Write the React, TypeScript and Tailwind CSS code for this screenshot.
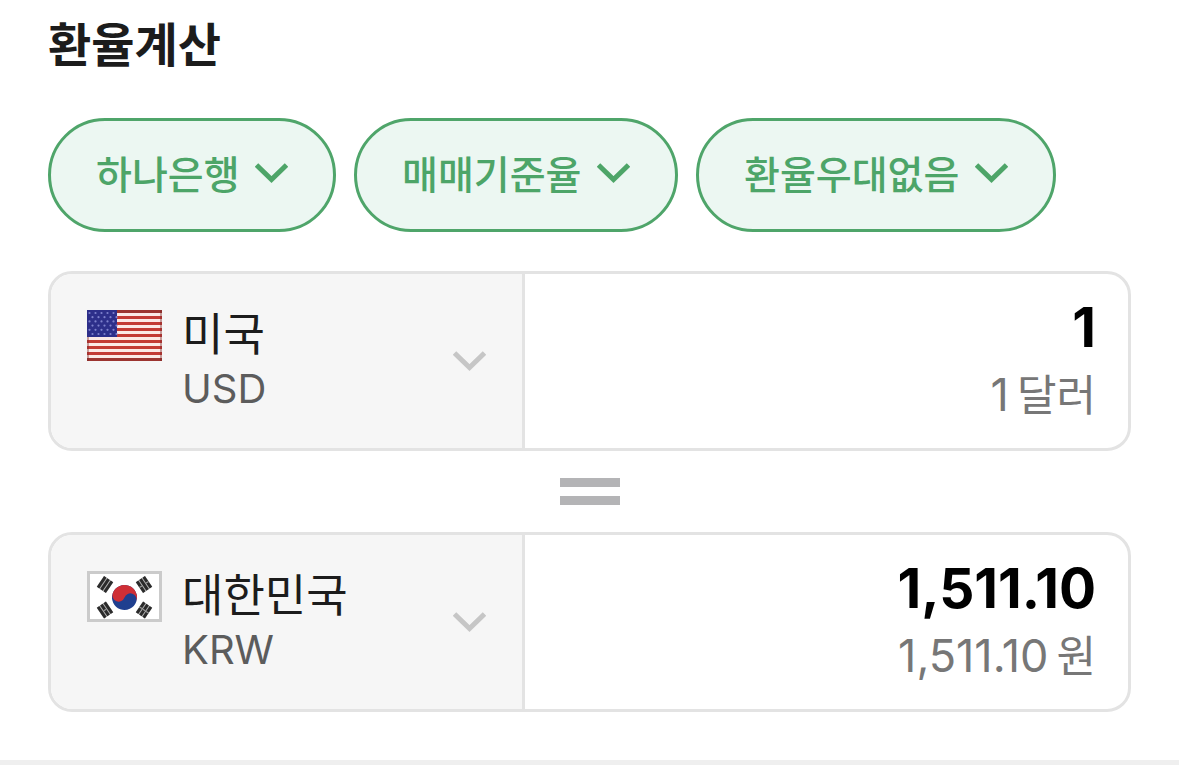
import React, { useState } from "react";

interface Currency {
  code: string;
  name: string;
  unit: string;
  flag: React.ReactNode;
}

const STAR_ROWS = [0, 1, 2, 3, 4, 5];
const STAR_COLS = [0, 1, 2, 3, 4];

function UsFlag() {
  return (
    <svg viewBox="0 0 75 51" className="h-[51px] w-[75px] shrink-0" aria-hidden="true">
      <rect width="75" height="51" fill="#fbe9e6" />
      {[0, 6, 12, 18, 24, 30, 36, 42, 48].map((y) => (
        <rect key={y} y={y} width="75" height="3" fill="#c33a34" />
      ))}
      <path d="M0 0h75v3H0zM0 48h75v3H0z" fill="#9c3430" />
      <path d="M0 27h2v24H0zM73 0h2v51h-2z" fill="#7a2a2a" opacity="0.4" />
      <rect width="30" height="27" fill="#2d2f8a" />
      {STAR_ROWS.map((row) =>
        STAR_COLS.map((col) => (
          <circle
            key={`${row}-${col}`}
            cx={2.5 + col * 6 + (row % 2 ? 3 : 0)}
            cy={3 + row * 4.2}
            r="1.1"
            fill="#7d80cc"
          />
        ))
      )}
    </svg>
  );
}

interface TrigramProps {
  x: number;
  y: number;
  angle: number;
  broken: number[];
}

function Trigram({ x, y, angle, broken }: TrigramProps) {
  return (
    <g transform={`translate(${x} ${y}) rotate(${angle})`}>
      <rect x="-6.5" y="-5.5" width="13" height="11" fill="#b5b5b5" />
      {[-4, 0, 4].map((dy, i) => (
        <g key={dy}>
          <rect x="-6.5" y={dy - 1.5} width="13" height="3" fill="#2b2b2b" />
          {broken.includes(i) && <rect x="-0.6" y={dy - 1.5} width="1.2" height="3" fill="#999" />}
        </g>
      ))}
    </g>
  );
}

function KrFlag() {
  return (
    <svg viewBox="0 0 75 51" className="h-[51px] w-[75px] shrink-0" aria-hidden="true">
      <rect x="1.5" y="1.5" width="72" height="48" fill="#fff" stroke="#cbcbcb" strokeWidth="3" />
      <g transform="rotate(20 37.5 26.5)">
        <circle cx="37.5" cy="26.5" r="12.5" fill="#1f3f8f" />
        <path
          d="M25 26.5a12.5 12.5 0 0 1 25 0a6.25 6.25 0 0 0-12.5 0a6.25 6.25 0 0 1-12.5 0z"
          fill="#cf2f36"
        />
      </g>
      <Trigram x={18} y={13.5} angle={-56} broken={[]} />
      <Trigram x={57} y={13.5} angle={56} broken={[0, 2]} />
      <Trigram x={18} y={39} angle={56} broken={[1]} />
      <Trigram x={57} y={39} angle={-56} broken={[0, 1, 2]} />
    </svg>
  );
}

function Chevron({ className }: { className: string }) {
  return (
    <svg
      viewBox="0 0 33 20"
      className={`pointer-events-none h-5 w-[33px] shrink-0 ${className}`}
      fill="none"
      stroke="currentColor"
      strokeWidth="5"
      aria-hidden="true"
    >
      <path d="M1.5 2 16.5 16.5 31.5 2" />
    </svg>
  );
}

const filters = [
  { id: "bank", label: "은행", value: "하나은행" },
  { id: "rate", label: "환율 종류", value: "매매기준율" },
  { id: "discount", label: "환율우대", value: "환율우대없음" },
];

const usd: Currency = { code: "USD", name: "미국", unit: "달러", flag: <UsFlag /> };
const krw: Currency = { code: "KRW", name: "대한민국", unit: "원", flag: <KrFlag /> };

function FilterSelect({ id, label, value }: { id: string; label: string; value: string }) {
  return (
    <div className="grid items-center">
      <select
        id={id}
        aria-label={label}
        defaultValue={value}
        className="col-start-1 row-start-1 h-[114px] appearance-none rounded-full border-3 border-[#4fa56a] bg-[#ecf7f2] pr-[93px] pl-[45px] text-[39px] font-medium text-[#4da568]"
      >
        <option>{value}</option>
      </select>
      <Chevron className="col-start-1 row-start-1 mr-12 mb-1 justify-self-end text-[#4da568]" />
    </div>
  );
}

interface CurrencyRowProps {
  currency: Currency;
  amount: string;
  onChange: (value: string) => void;
}

function CurrencyRow({ currency, amount, onChange }: CurrencyRowProps) {
  return (
    <div className="flex h-[180px] overflow-hidden rounded-3xl border-3 border-[#e3e3e3] bg-white">
      <div className="flex w-[44%] items-center border-r-3 border-[#e3e3e3] bg-[#f6f6f6] px-9">
        <div className="flex min-w-0 flex-1 items-start gap-5">
          <div className="pt-[3px]">{currency.flag}</div>
          <div className="min-w-0 flex-1">
            <select
              id={`country-${currency.code}`}
              aria-label="국가"
              defaultValue={currency.name}
              className="block h-14 w-full appearance-none bg-transparent text-[45px] leading-14 text-[#1c1c1c]"
            >
              <option>{currency.name}</option>
            </select>
            <label htmlFor={`country-${currency.code}`} className="block text-[40px] leading-[52px] text-[#5c5c5c]">
              {currency.code}
            </label>
          </div>
        </div>
        <Chevron className="text-[#c6c6c6]" />
      </div>
      <div className="flex min-w-0 flex-1 flex-col justify-center pr-8 pl-9">
        <input
          type="text"
          inputMode="decimal"
          aria-label={`${currency.name} ${currency.code}`}
          value={amount}
          onChange={(e) => onChange(e.target.value)}
          className="h-[68px] w-full bg-transparent text-right text-[55px] font-bold text-black outline-none"
        />
        <p className="flex items-baseline justify-end gap-2 text-[#777]">
          <span className="text-[45px] leading-[68px]">{amount}</span>
          <span className="text-[43px] leading-[68px]">{currency.unit}</span>
        </p>
      </div>
    </div>
  );
}

export default function App() {
  const [from, setFrom] = useState("1");
  const [to, setTo] = useState("1,511.10");

  return (
    <main className="bg-white font-[Inter,'Noto_Sans_CJK_KR',sans-serif]">
      <section className="px-12 pt-3 pb-12">
        <h1 className="text-[47px] leading-[66px] font-bold text-[#1c1c1c]">환율계산</h1>
        <div className="mt-10 flex gap-[18px]">
          {filters.map((filter) => (
            <FilterSelect key={filter.id} {...filter} />
          ))}
        </div>
        <div className="mt-[39px]">
          <CurrencyRow currency={usd} amount={from} onChange={setFrom} />
          <div className="flex h-[81px] flex-col items-center justify-center gap-[9px]" role="img" aria-label="=">
            <div className="h-[9px] w-[60px] bg-[#b4b4b6]" />
            <div className="h-[9px] w-[60px] bg-[#b4b4b6]" />
          </div>
          <CurrencyRow currency={krw} amount={to} onChange={setTo} />
        </div>
      </section>
      <div className="h-[5px] bg-[#efefef]" />
    </main>
  );
}
